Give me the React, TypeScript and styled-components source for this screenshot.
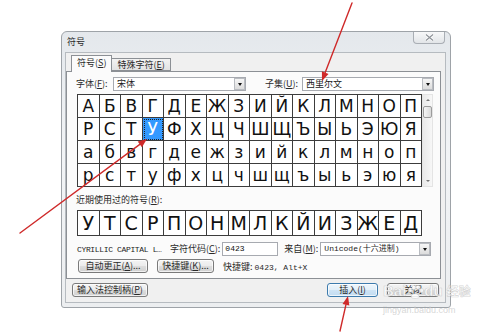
import styled, { createGlobalStyle } from "styled-components";

const GlobalStyle = createGlobalStyle`
  html, body {
    margin: 0;
    padding: 0;
    background: #fff;
  }
  body {
    font-family: "Noto Sans CJK SC", "DejaVu Sans", sans-serif;
  }
`;

const Page = styled.div`
  position: relative;
  width: 500px;
  height: 333px;
  overflow: hidden;
  box-sizing: border-box;
  padding: 31px 0 0 61px;
  background: #fff;
`;

const Dialog = styled.div`
  width: 390px;
  height: 277px;
  box-sizing: border-box;
  border: 1px solid #9ea3a8;
  border-radius: 6px 6px 3px 3px;
  background: linear-gradient(180deg, #e4e8ec 0%, #f2f4f6 45%, #eceef0 100%);
  padding: 0 4px 4px 3px;
  display: flex;
  flex-direction: column;
`;

const TitleBar = styled.div`
  height: 20px;
  display: flex;
  align-items: flex-start;
  justify-content: space-between;
`;

const Title = styled.span`
  font-size: 9px;
  line-height: 12px;
  margin: 4px 0 0 2px;
  color: #2a2a2a;
`;

const CloseButton = styled.div`
  width: 32px;
  height: 12px;
  margin-right: 1px;
  box-sizing: border-box;
  border: 1px solid #a9aeb4;
  border-top: none;
  border-radius: 0 0 4px 4px;
  background: linear-gradient(180deg, #f7f8f9, #e2e5e8);
  display: flex;
  align-items: center;
  justify-content: center;
`;

const Client = styled.div`
  flex: 1;
  display: flex;
  flex-direction: column;
  background: #f0f0f0;
  border: 1px solid #b6bbc0;
  padding: 2px 4px 0 0;
`;

const TabStrip = styled.div`
  height: 17px;
  display: flex;
  align-items: flex-end;
  padding-left: 5px;
  margin-bottom: -1px;
  position: relative;
  z-index: 1;
`;

const Tab = styled.div<{ $active?: boolean }>`
  box-sizing: border-box;
  height: ${(p) => (p.$active ? "17px" : "13px")};
  margin-bottom: ${(p) => (p.$active ? "0" : "1px")};
  padding: ${(p) => (p.$active ? "1px 5px 0 5px" : "0 5px")};
  border: 1px solid #8c9095;
  border-bottom: ${(p) => (p.$active ? "none" : "1px solid #8c9095")};
  border-left: ${(p) => (p.$active ? "1px solid #8c9095" : "none")};
  background: ${(p) =>
    p.$active ? "#fbfbfb" : "linear-gradient(180deg, #f3f3f3, #e2e2e2)"};
  font-size: 9px;
  line-height: 12px;
  color: #2a2a2a;
  white-space: nowrap;
`;

const TabPage = styled.div`
  height: 208px;
  box-sizing: border-box;
  border: 1px solid #8c9095;
  background: #fbfbfb;
  display: flex;
  flex-direction: column;
`;

const Row = styled.div<{ $top: number; $left: number; $height?: number }>`
  display: flex;
  align-items: center;
  margin-top: ${(p) => p.$top}px;
  padding-left: ${(p) => p.$left}px;
  height: ${(p) => p.$height ?? 14}px;
`;

const Label = styled.span<{ $width?: number; $gap?: number }>`
  font-size: 9px;
  line-height: 14px;
  color: #2a2a2a;
  white-space: nowrap;
  width: ${(p) => (p.$width ? `${p.$width}px` : "auto")};
  margin-left: ${(p) => p.$gap ?? 0}px;
  flex-shrink: 0;
`;

const Combo = styled.div<{ $width: number; $gap?: number }>`
  width: ${(p) => p.$width}px;
  margin-left: ${(p) => p.$gap ?? 0}px;
  height: 14px;
  box-sizing: border-box;
  border: 1px solid #a7aab0;
  background: #fff;
  display: flex;
  align-items: stretch;
  flex-shrink: 0;
`;

const ComboText = styled.span<{ $mono?: boolean }>`
  flex: 1;
  padding-left: 3px;
  font-family: ${(p) =>
    p.$mono
      ? `"Liberation Mono", "Noto Sans CJK SC", monospace`
      : `"Noto Sans CJK SC", sans-serif`};
  font-size: ${(p) => (p.$mono ? "8px" : "9px")};
  line-height: 12px;
  color: #1a1a1a;
  white-space: nowrap;
  overflow: hidden;
`;

const DropButton = styled.span`
  width: 11px;
  box-sizing: border-box;
  border: 1px solid #b9bcc1;
  background: linear-gradient(180deg, #f6f6f6, #dcdcdc);
  display: flex;
  align-items: center;
  justify-content: center;
  &::after {
    content: "";
    border-left: 2.5px solid transparent;
    border-right: 2.5px solid transparent;
    border-top: 3px solid #111;
  }
`;

const GridRow = styled.div`
  display: flex;
  margin-top: 3px;
  padding-left: 10px;
`;

const Grid = styled.div<{ $cell: number }>`
  display: grid;
  grid-template-columns: repeat(16, 1fr);
  grid-auto-rows: ${(p) => p.$cell}px;
  width: 345px;
  box-sizing: border-box;
  border-top: 1px solid #3c3c3c;
  border-left: 1px solid #3c3c3c;
  background: #fff;
`;

const Cell = styled.div<{ $selected?: boolean; $big?: boolean }>`
  box-sizing: border-box;
  border-right: 1px solid #3c3c3c;
  border-bottom: 1px solid #3c3c3c;
  display: flex;
  align-items: center;
  justify-content: center;
  font-family: "DejaVu Sans", sans-serif;
  font-size: ${(p) => (p.$big ? "19px" : "17px")};
  color: ${(p) => (p.$selected ? "#fff" : "#111")};
  background: ${(p) => (p.$selected ? "#3399ff" : "#fff")};
  outline: ${(p) => (p.$selected ? "1px dotted #222" : "none")};
  outline-offset: -2px;
`;

const Scrollbar = styled.div`
  width: 11px;
  height: 93px;
  box-sizing: border-box;
  border: 1px solid #e4e4e4;
  background: linear-gradient(90deg, #eaeaea, #f7f7f7);
  display: flex;
  flex-direction: column;
`;

const ScrollArrow = styled.div<{ $down?: boolean }>`
  height: 10px;
  display: flex;
  align-items: center;
  justify-content: center;
  &::after {
    content: "";
    border-left: 2px solid transparent;
    border-right: 2px solid transparent;
    ${(p) =>
      p.$down ? "border-top: 2px solid #777;" : "border-bottom: 2px solid #777;"}
  }
`;

const Thumb = styled.div`
  height: 12px;
  margin: 1px 0 0 0;
  box-sizing: border-box;
  border: 1px solid #9c9c9c;
  border-radius: 2px;
  background: linear-gradient(90deg, #f6f6f6, #dadada);
`;

const Track = styled.div`
  flex: 1;
`;

const CharName = styled.span`
  width: 89px;
  flex-shrink: 0;
  font-family: "Liberation Mono", monospace;
  font-size: 8px;
  letter-spacing: -0.35px;
  color: #222;
  white-space: nowrap;
`;

const CodeInput = styled.div`
  width: 56px;
  height: 14px;
  margin-left: 2px;
  box-sizing: border-box;
  border: 1px solid #a7aab0;
  background: #fff;
  font-family: "Liberation Mono", monospace;
  font-size: 8px;
  line-height: 12px;
  padding-left: 2px;
  color: #111;
`;

const Button = styled.div<{ $width: number; $gap?: number; $default?: boolean }>`
  width: ${(p) => p.$width}px;
  margin-left: ${(p) => p.$gap ?? 0}px;
  height: 14px;
  box-sizing: border-box;
  flex-shrink: 0;
  border: 1px solid ${(p) => (p.$default ? "#3d7bad" : "#7a7a7a")};
  border-radius: 3px;
  background: ${(p) =>
    p.$default
      ? "linear-gradient(180deg, #eef6fc 0%, #e2eff9 50%, #cfe4f5 51%, #c2dcf1 100%)"
      : "linear-gradient(180deg, #f4f4f4 0%, #ebebeb 50%, #dddddd 51%, #d0d0d0 100%)"};
  box-shadow: inset 0 0 0 1px rgba(255, 255, 255, 0.7);
  display: flex;
  align-items: center;
  justify-content: center;
  font-size: 9px;
  line-height: 12px;
  color: #2a2a2a;
  white-space: nowrap;
`;

const ShortcutText = styled.span`
  margin-left: 9px;
  font-size: 9px;
  color: #2a2a2a;
  white-space: nowrap;
`;

const Mono = styled.span`
  font-family: "Liberation Mono", monospace;
  font-size: 8px;
`;

const BottomRow = styled.div`
  display: flex;
  align-items: center;
  height: 14px;
  margin-top: 4px;
  padding-left: 6px;
  padding-right: 2px;
`;

const Spacer = styled.div`
  flex: 1;
`;

const Annotations = styled.svg`
  position: absolute;
  left: 0;
  top: 0;
  pointer-events: none;
`;

const Watermark = styled.div`
  position: absolute;
  left: 383px;
  top: 283px;
  display: flex;
  flex-direction: column;
  align-items: flex-start;
  pointer-events: none;
`;

const WatermarkLogo = styled.div`
  display: flex;
  align-items: flex-end;
  font-family: "Liberation Sans", sans-serif;
  font-weight: bold;
  font-size: 15px;
  line-height: 16px;
  color: rgba(255, 255, 255, 0.8);
  -webkit-text-stroke: 0.6px rgba(160, 160, 160, 0.45);
`;

const WatermarkCjk = styled.span`
  font-family: "Noto Sans CJK SC", sans-serif;
  font-size: 12px;
  margin-left: 4px;
`;

const WatermarkUrl = styled.span`
  margin-top: 6px;
  font-family: "Liberation Sans", sans-serif;
  font-size: 9px;
  color: rgba(210, 210, 210, 0.9);
`;

const grid = [
  "АБВГДЕЖЗИЙКЛМНОП",
  "РСТУФХЦЧШЩЪЫЬЭЮЯ",
  "абвгдежзийклмноп",
  "рстуфхцчшщъыьэюя",
].join("").split("");

const recent = "УТСРПОНМЛКЙИЗЖЕД".split("");

const SELECTED = 19;

const App = () => {
  return (
    <Page>
      <GlobalStyle />
      <Dialog>
        <TitleBar>
          <Title>符号</Title>
          <CloseButton>
            <svg width="9" height="7" viewBox="0 0 9 7">
              <path d="M1 0.5 L8 6.5 M8 0.5 L1 6.5" stroke="#fff" strokeWidth="2.6" />
              <path d="M1 0.5 L8 6.5 M8 0.5 L1 6.5" stroke="#8e9399" strokeWidth="1.2" />
            </svg>
          </CloseButton>
        </TitleBar>
        <Client>
          <TabStrip>
            <Tab $active>
              符号(<u>S</u>)
            </Tab>
            <Tab>
              特殊字符(<u>E</u>)
            </Tab>
          </TabStrip>
          <TabPage>
            <Row $top={5} $left={9}>
              <Label $width={37}>
                字体(<u>F</u>):
              </Label>
              <Combo $width={133}>
                <ComboText>宋体</ComboText>
                <DropButton />
              </Combo>
              <Label $width={37} $gap={19}>
                子集(<u>U</u>):
              </Label>
              <Combo $width={132}>
                <ComboText>西里尔文</ComboText>
                <DropButton />
              </Combo>
            </Row>
            <GridRow>
              <Grid $cell={23}>
                {grid.map((ch, i) => (
                  <Cell key={i} $selected={i === SELECTED}>
                    {ch}
                  </Cell>
                ))}
              </Grid>
              <Scrollbar>
                <ScrollArrow />
                <Thumb />
                <Track />
                <ScrollArrow $down />
              </Scrollbar>
            </GridRow>
            <Row $top={6} $left={9}>
              <Label>
                近期使用过的符号(<u>R</u>):
              </Label>
            </Row>
            <GridRow>
              <Grid $cell={25}>
                {recent.map((ch, i) => (
                  <Cell key={i} $big>
                    {ch}
                  </Cell>
                ))}
              </Grid>
            </GridRow>
            <Row $top={6} $left={10}>
              <CharName>CYRILLIC CAPITAL L…</CharName>
              <Label $gap={4}>
                字符代码(<u>C</u>):
              </Label>
              <CodeInput>0423</CodeInput>
              <Label $gap={6} $width={36}>
                来自(<u>M</u>):
              </Label>
              <Combo $width={111}>
                <ComboText $mono>Unicode(十六进制)</ComboText>
                <DropButton />
              </Combo>
            </Row>
            <Row $top={3} $left={11}>
              <Button $width={70}>
                自动更正(<u>A</u>)...
              </Button>
              <Button $width={57} $gap={9}>
                快捷键(<u>K</u>)...
              </Button>
              <ShortcutText>
                快捷键: <Mono>0423, Alt+X</Mono>
              </ShortcutText>
            </Row>
          </TabPage>
          <BottomRow>
            <Button $width={76}>
              输入法控制柄(<u>P</u>)
            </Button>
            <Spacer />
            <Button $width={51} $default>
              插入(<u>I</u>)
            </Button>
            <Button $width={52} $gap={9}>
              关闭
            </Button>
          </BottomRow>
        </Client>
      </Dialog>

      <Watermark>
        <WatermarkLogo>
          Bai
          <svg width="18" height="14" viewBox="0 0 18 14">
            <g fill="rgba(255,255,255,0.85)" stroke="rgba(160,160,160,0.45)" strokeWidth="0.6">
              <ellipse cx="4" cy="5" rx="2" ry="2.5" />
              <ellipse cx="8" cy="2.5" rx="2" ry="2.3" />
              <ellipse cx="12" cy="2.5" rx="2" ry="2.3" />
              <ellipse cx="15.5" cy="5.5" rx="1.8" ry="2.3" />
              <path d="M5 12 C6 7.5 12 7.5 13.5 12 C12 14 6 14 5 12 Z" />
            </g>
          </svg>
          du
          <WatermarkCjk>经验</WatermarkCjk>
        </WatermarkLogo>
        <WatermarkUrl>jingyan.baidu.com</WatermarkUrl>
      </Watermark>

      <Annotations width="500" height="333" viewBox="0 0 500 333">
        <g stroke="#cf2a2a" strokeWidth="1.4" fill="#cf2a2a" strokeLinecap="round">
          <line x1="352" y1="3" x2="325.2" y2="72.6" />
          <polygon points="322,81 328.5,73.9 321.9,71.3" stroke="none" />
          <line x1="20" y1="233" x2="139.8" y2="144.4" />
          <polygon points="147,139 141.9,147.2 137.7,141.6" stroke="none" />
          <line x1="340" y1="331" x2="345.9" y2="304.8" />
          <polygon points="348,296 349.3,305.6 342.5,304" stroke="none" />
        </g>
      </Annotations>
    </Page>
  );
};

export default App;
